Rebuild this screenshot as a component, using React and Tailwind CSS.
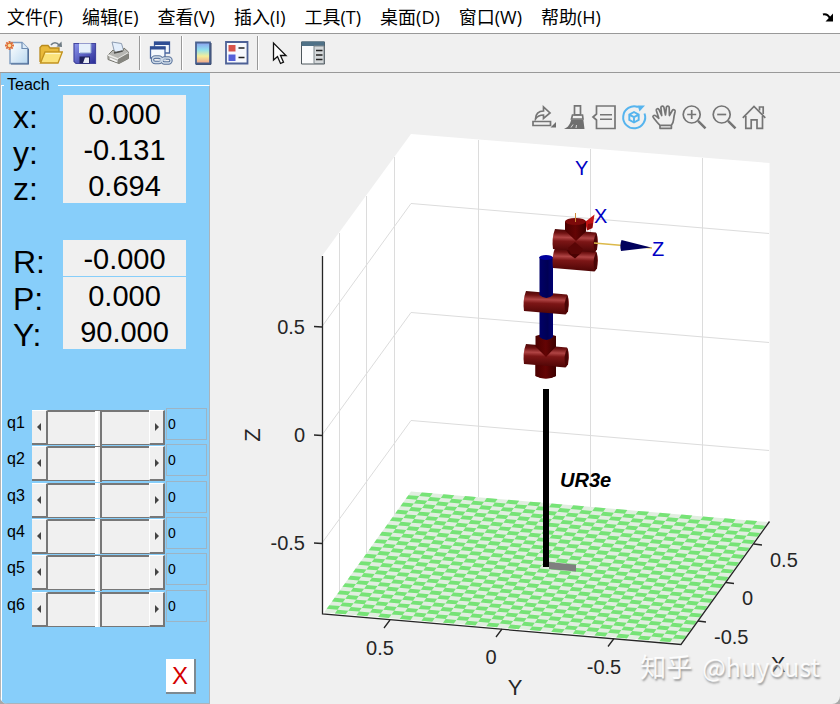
import React from 'react';

const MENUS = ['文件(F)', '编辑(E)', '查看(V)', '插入(I)', '工具(T)', '桌面(D)', '窗口(W)', '帮助(H)'];
const POSITION = [['x:', '0.000'], ['y:', '-0.131'], ['z:', '0.694']];
const ORIENTATION = [['R:', '-0.000'], ['P:', '0.000'], ['Y:', '90.000']];
const JOINTS = ['q1', 'q2', 'q3', 'q4', 'q5', 'q6'];

/* ---------- figure toolbar icons ---------- */

const NewIcon = () => (
  <svg viewBox="0 0 24 24" className="size-6">
    <defs>
      <linearGradient id="page" x1="0" y1="0" x2="1" y2="1">
        <stop offset="0" stopColor="#ffffff" />
        <stop offset="1" stopColor="#b9d8f0" />
      </linearGradient>
    </defs>
    <path d="M5 1.500h12l6 6V22.500H5z" fill="url(#page)" stroke="#7f9cc0" strokeWidth="1.400" />
    <path d="M17 1.500v6h6" fill="#dcebf8" stroke="#6f8cb2" strokeWidth="1.200" />
    <path d="M23.300 8v15H6" fill="none" stroke="#4a6892" strokeWidth="1.200" />
    <path d="M4.500 0v9M0 4.500h9M1.300 1.300l6.400 6.400M7.700 1.300L1.300 7.700" stroke="#e0703a" strokeWidth="1.900" />
    <circle cx="4.500" cy="4.500" r="1.700" fill="#fbe3a0" />
  </svg>
);

const OpenIcon = () => (
  <svg viewBox="0 0 24 24" className="size-6">
    <path d="M1 21V6.500L3 4.500h6l2 2.500h9v5" fill="#e9b93a" stroke="#b98a1c" strokeWidth="1.300" />
    <path d="M1.500 22L6 11h17.300L19 22z" fill="#fbe27a" stroke="#c2921f" strokeWidth="1.300" />
    <path d="M6.500 12.500h15" stroke="#fff6c4" strokeWidth="1.300" />
    <path d="M12 4c2-3 6-3 8 0" fill="none" stroke="#6e7b84" strokeWidth="1.600" />
    <path d="M17.500 5.500L23 6l-.500-5.500z" fill="#6e7b84" />
  </svg>
);

const SaveIcon = () => (
  <svg viewBox="0 0 24 24" className="size-6">
    <defs>
      <linearGradient id="disk" x1="0" y1="0" x2="1" y2="1">
        <stop offset="0" stopColor="#8d96ee" />
        <stop offset="1" stopColor="#2a2c96" />
      </linearGradient>
    </defs>
    <path d="M1 2.500h21.500v20H3l-2-2z" fill="url(#disk)" stroke="#44469f" strokeWidth="1.200" />
    <path d="M6 2.500h12v9.500H6z" fill="#e6f0fb" />
    <path d="M18 2.500v9.500H7" fill="none" stroke="#8da3cf" />
    <path d="M6.500 15.500h10.500v7H6.500z" fill="#20225c" />
    <path d="M12 16.500h4v5.500h-6z" fill="#e8ecf5" />
  </svg>
);

const PrintIcon = () => (
  <svg viewBox="0 0 24 24" className="size-6">
    <path d="M5 1l9.500 1.500 2.500 8.500-9 2z" fill="#e3eefb" stroke="#8c9bb0" />
    <path d="M1 14l5-5 3 2.500 7-1.500 1-3 4.500 4v6.500L12 22.500 1 18.500z" fill="#b7b7b3" stroke="#77776f" />
    <path d="M1 14l10 4 10.500-6" fill="none" stroke="#ededea" strokeWidth="1.500" />
    <path d="M11 18v4.500l10.500-5V12z" fill="#85857f" />
    <path d="M3 17.500l7 3" stroke="#f7f7f7" strokeWidth="1.500" />
    <path d="M7 12l8.500-2" stroke="#4f4f4c" strokeWidth="1.500" />
  </svg>
);

const LinkIcon = () => (
  <svg viewBox="0 0 24 24" className="size-6">
    <path d="M5.500 1h15v11h-15z" fill="#f4f8fd" stroke="#4b67a0" strokeWidth="1.300" />
    <path d="M5 1h16v3H5z" fill="#2f4e94" />
    <path d="M1.500 6h14.500v11H1.500z" fill="#f4f8fd" stroke="#4b67a0" strokeWidth="1.300" />
    <path d="M1 5.500h15.500v3H1z" fill="#2f4e94" />
    <g fill="none" stroke="#57719a" strokeWidth="3.400">
      <rect x="3.500" y="16" width="9" height="5.500" rx="2.700" />
      <rect x="13" y="17" width="9" height="5" rx="2.500" />
    </g>
    <g fill="none" stroke="#cfdbe9" strokeWidth="1.300">
      <rect x="3.500" y="16" width="9" height="5.500" rx="2.700" />
      <rect x="13" y="17" width="9" height="5" rx="2.500" />
      <path d="M9 19h8" />
    </g>
  </svg>
);

const ColorbarIcon = () => (
  <svg viewBox="0 0 24 24" className="size-6">
    <defs>
      <linearGradient id="cbar" x1="0" y1="0" x2="0" y2="1">
        <stop offset="0" stopColor="#8a9ff0" />
        <stop offset=".35" stopColor="#8fe0ee" />
        <stop offset=".65" stopColor="#f4ee9a" />
        <stop offset="1" stopColor="#f0a08a" />
      </linearGradient>
    </defs>
    <path d="M5 1.500h14v21H5z" fill="url(#cbar)" stroke="#4a6290" strokeWidth="1.800" />
    <path d="M20 2v21.300H5" fill="none" stroke="#2d3f66" />
  </svg>
);

const LegendIcon = () => (
  <svg viewBox="0 0 24 24" className="size-6">
    <path d="M1 1h21.500v21.500H1z" fill="#f7f9fd" stroke="#4d6196" strokeWidth="1.800" />
    <path d="M3.500 4h7v6.500h-7z" fill="#d9534a" />
    <path d="M3.500 13.500h7V20h-7z" fill="#5560d8" />
    <path d="M13.500 7h6M13.500 16.500h6" stroke="#222" strokeWidth="1.600" />
  </svg>
);

const PointerIcon = () => (
  <svg viewBox="0 0 24 24" className="size-6">
    <path d="M6.500 2v17l4-3.500 3 7 3-1.300-3-6.700H19z" fill="#fff" stroke="#111" strokeWidth="1.300" />
  </svg>
);

const InspectorIcon = () => (
  <svg viewBox="0 0 24 24" className="size-6">
    <path d="M.5 1h23v22H.5z" fill="#fafbfc" stroke="#4d565c" />
    <path d="M.5.500h23V5H.5z" fill="#4f7187" />
    <path d="M13 5h10v17.500H13z" fill="#d4d8da" stroke="#7e878c" />
    <path d="M15 9.500h6.500M15 14h6.500M15 18.500h6.500" stroke="#222" strokeWidth="1.600" />
  </svg>
);

const TOOL_GROUPS = [
  [['New figure', NewIcon], ['Open', OpenIcon], ['Save', SaveIcon], ['Print', PrintIcon]],
  [['Link plot', LinkIcon]],
  [['Colorbar', ColorbarIcon], ['Legend', LegendIcon]],
  [['Edit plot', PointerIcon], ['Inspector', InspectorIcon]],
];

/* ---------- axes toolbar icons ---------- */

const AXES_TOOLS = [
  ['Export', (
    <>
      <path d="M1 16.500h17.500v4H1z" />
      <path d="M3.500 14c0-5 3-8 8-8V2l6.500 6-6.500 5.500V10C8 10 5.500 11 3.500 14z" />
      <path d="M24 17v5.500h-5.500z" fill="#6e6e6e" stroke="none" />
    </>
  )],
  ['Brush', (
    <>
      <path d="M12.500.800h6v9h-6z" />
      <path d="M10.500 10h10l.500 4H9.500z" />
      <path d="M9.300 14.500h12L22.500 24H2c4-1.500 6-4.500 7.300-9.500z" fill="#6e6e6e" stroke="none" />
      <path d="M9 22.500l2-3M14 23l.500-3" stroke="#d8d8d8" strokeWidth="1" />
    </>
  )],
  ['Data tips', (
    <>
      <path d="M4.500 1h18.500v22.500H4.500V15L1 12l3.500-3z" />
      <path d="M8 9.800h12M8 14.200h12" strokeWidth="1.600" />
    </>
  )],
  ['Rotate 3D', (
    <g stroke="#56b4ee">
      <path d="M16 2A11 11 0 1 0 22.500 8.500" strokeWidth="2" />
      <path d="M15.500.500h7.500l-5.500 6z" fill="#56b4ee" stroke="none" />
      <path d="M12 7l4.700 2.600v5.300L12 17.500l-4.700-2.600V9.600zM7.300 9.600l4.700 2.600 4.700-2.600M12 12.200v5.300" strokeWidth="1.900" />
    </g>
  )],
  ['Pan', (
    <path
      d="M8 23.300v-3C5.500 18 3.300 15 1.200 12.300c-.9-1.300.9-2.700 2.300-1.600l3.300 2.600L4.300 5.500c-.4-1.800 2-2.500 2.700-.8L9.700 10.500 8.900 2.700c0-1.900 2.600-2.100 3-.3l1.600 7.600L14.400 2.200c.3-1.700 2.800-1.400 2.800.4l.2 8L20.300 5.500c.9-1.600 3.200-.8 2.800 1-.9 3.500-1.200 5-1.500 8-.2 2.500-.7 4-2.200 5.800v3z M8.500 20.300h10.500"
      strokeLinejoin="round"
    />
  )],
  ['Zoom in', (
    <>
      <circle cx="9.700" cy="9.500" r="8.500" />
      <path d="M9.700 5v9M5.200 9.500h9" />
      <path d="M16 15.800l7.500 7.500" strokeWidth="2.400" />
    </>
  )],
  ['Zoom out', (
    <>
      <circle cx="9.700" cy="9.500" r="8.500" />
      <path d="M5.200 9.500h9" />
      <path d="M16 15.800l7.500 7.500" strokeWidth="2.400" />
    </>
  )],
  ['Restore view', (
    <>
      <path d="M.8 12.800L12 1.500l11.300 11.300" />
      <path d="M3.800 11v12.300h5.400v-8.500h5.800v8.500h5.500V11" />
      <path d="M17.500 5.500V2h3.700v7" />
    </>
  )],
];

/* ---------- plot ---------- */

const TILES = 33;
// back-left corner of the floor plus i steps along Y and j steps along X
const tile = (i, j) =>
  `${(411 + (357 * i - 87 * j) / TILES).toFixed(2)} ${(491.5 + (30.5 * i + 121 * j) / TILES).toFixed(2)}`;

let floor = '';
for (let j = 0; j < TILES; j++) {
  for (let i = 0; i < TILES; i++) {
    if ((i + j) % 2) {
      floor += `M${tile(i, j)}L${tile(i + 1, j)}L${tile(i + 1, j + 1)}L${tile(i, j + 1)}z`;
    }
  }
}

// horizontal joint cylinder, x/y is the top-left corner
const Joint = ({ x, y }) => (
  <g transform={`translate(${x} ${y})`}>
    <path d="M2 0L43 3.500Q46 9 44 20.500L41.500 23.500L0 20Q-1.500 9 2 0z" fill="url(#red)" />
    <path d="M43.500 4Q38.500 12 42 23Q46 15 43.500 4z" fill="#4a0505" />
  </g>
);

function RobotPlot() {
  return (
    <svg viewBox="210 132 630 572" className="block w-full h-auto" fontFamily="'Liberation Sans', Arial, sans-serif">
      <defs>
        <linearGradient id="red" x1="0" y1="0" x2="-.06" y2="1">
          <stop offset="0" stopColor="#4d0707" />
          <stop offset=".16" stopColor="#701212" />
          <stop offset=".34" stopColor="#b04444" />
          <stop offset=".5" stopColor="#7c1616" />
          <stop offset="1" stopColor="#480303" />
        </linearGradient>
        <linearGradient id="redUp" x1="0" y1="0" x2="1" y2="0">
          <stop offset="0" stopColor="#4a0000" />
          <stop offset=".5" stopColor="#640404" />
          <stop offset="1" stopColor="#3c0000" />
        </linearGradient>
        <linearGradient id="blue" x1="0" y1="0" x2="1" y2="0">
          <stop offset="0" stopColor="#000068" />
          <stop offset=".6" stopColor="#000054" />
          <stop offset="1" stopColor="#000074" />
        </linearGradient>
      </defs>

      {/* walls */}
      <path d="M322 256L411 134L769.500 163V522L681 644L322 614z" fill="#fff" />
      <g fill="none" stroke="#dcdcdc">
        <path d="M339.500 233V591M366.500 196V553M394.500 157V515" />
        <path d="M478.500 140V497M590.500 149V507M702.500 158V517" />
        <path d="M322 326.500L411 203.500L769 233.500M322 435L411 312.500L769 342.500M322 543L411 420.500L769 450.500" />
      </g>

      {/* floor */}
      <path d="M411 491.500L768 522L681 643L324 612.500z" fill="#e1eee0" />
      <path d={floor} fill="#76e376" />

      {/* rulers */}
      <g fill="none" stroke="#262626" strokeWidth="1.300">
        <path d="M322.500 256V614L681 644.500L769.500 521.500" />
        <path d="M314 326.500l8 .500M314 435l8 .500M314 543l8 .500" />
        <path d="M390 620l-6 8M502 629l-6 8M614 638.500l-6 8" />
        <path d="M754 544l8 1M726 582.500l8 1M698 621l8 1" />
      </g>
      <g fill="#262626" fontSize="20">
        <text x="305" y="334" textAnchor="end">0.5</text>
        <text x="305" y="442" textAnchor="end">0</text>
        <text x="305" y="550" textAnchor="end">-0.5</text>
        <text x="380" y="655" textAnchor="middle">0.5</text>
        <text x="491" y="664" textAnchor="middle">0</text>
        <text x="604" y="674" textAnchor="middle">-0.5</text>
        <text x="770" y="567">0.5</text>
        <text x="742" y="605">0</text>
        <text x="714" y="644">-0.5</text>
      </g>
      <g fill="#262626" fontSize="22" textAnchor="middle">
        <text transform="translate(260 435) rotate(-90)">Z</text>
        <text x="515" y="695">Y</text>
        <text x="778" y="672">X</text>
      </g>

      {/* base */}
      <path d="M549 562L576 564.700V571.500L549 569z" fill="#7f7f7f" />
      <path d="M543 389h6v178h-6z" fill="#000" />
      <text x="560" y="487" fontSize="20" fontWeight="bold" fontStyle="italic">UR3e</text>

      {/* lower joints and links */}
      <path d="M535.500 360h20.500v16q-10 5-20.500 0z" fill="url(#redUp)" />
      <Joint x={524} y={344} />
      <path d="M535.500 365L556 367v9q-10 5-20.500 0z" fill="url(#redUp)" />
      <path d="M535.500 336q10-4 20.500 0v10.500L546 357l-10.500-10.500z" fill="url(#redUp)" />
      <path d="M539.500 310h13.500v27q-6.500 6-13.500 0z" fill="url(#blue)" />
      <Joint x={524} y={291} />
      <path d="M539.500 257h13.500v38q-6.500 6-13.500 0z" fill="url(#blue)" />
      <ellipse cx="546" cy="257.500" rx="6.700" ry="2.500" fill="#00009c" />

      {/* wrist */}
      <Joint x={553} y={248} />
      <path d="M565 247h20l-5 7-5 4.500-6-4.500z" fill="#4a0202" />
      <Joint x={553} y={229} />
      <path d="M568 248l7-6 8 7-3 5h-9z" fill="#590606" />
      <path d="M585 222L594.500 214.500L592.500 228L587 230.500z" fill="#c21414" />
      <path d="M588 224l5-1-1 5-5 2z" fill="#8a0a0a" />
      <path d="M565 221.500h21v10L576 241l-11-10.500z" fill="url(#redUp)" />
      <ellipse cx="575.500" cy="221.500" rx="10.500" ry="3.500" fill="#7c0a0a" />
      <path d="M575.500 213v9" stroke="#d08a3c" />
      <path d="M594 243L652 248" stroke="#dcb94a" strokeWidth="1.300" />
      <path d="M621.500 240L651 247.500L621 251q-1.500-5 .500-11z" fill="#00005c" />
      <g fill="#0000c4" fontSize="20">
        <text x="575" y="175">Y</text>
        <text x="594" y="223">X</text>
        <text x="652" y="256">Z</text>
      </g>
    </svg>
  );
}

/* ---------- teach panel ---------- */

function PoseRows({ rows, className }) {
  return (
    <div className={className}>
      {rows.map(([name, value]) => (
        <div key={name} className="flex h-9">
          <label htmlFor={`pose-${name}`} className="w-[50px] pt-1 text-[32px] leading-9">{name}</label>
          <output id={`pose-${name}`} className="w-[123px] bg-[#f0f0f0] text-center text-[29px] leading-[38px]">{value}</output>
        </div>
      ))}
    </div>
  );
}

function JointSlider({ name }) {
  return (
    <div className="flex items-start">
      <label htmlFor={name} className="w-[25px] text-base leading-[26px]">{name}</label>
      <div className="flex h-[35px] w-[133px] bg-[#f0f0f0]">
        <button type="button" aria-label={`${name} down`} className="flex w-4 items-center justify-center border-t border-r-2 border-b-2 border-t-white border-r-[#777] border-b-[#777]">
          <svg viewBox="0 0 4 8" className="h-2 w-1"><path d="M4 0v8L0 4z" fill="#444" /></svg>
        </button>
        <input
          id={name}
          type="range"
          min="-180"
          max="180"
          defaultValue="0"
          className="m-0 h-[35px] min-w-0 flex-1 appearance-none border-t-2 border-b border-[#777] bg-[#f0f0f0] [&::-webkit-slider-thumb]:h-[35px] [&::-webkit-slider-thumb]:w-[7px] [&::-webkit-slider-thumb]:appearance-none [&::-webkit-slider-thumb]:border-r-2 [&::-webkit-slider-thumb]:border-l-3 [&::-webkit-slider-thumb]:border-r-[#777] [&::-webkit-slider-thumb]:border-l-white [&::-webkit-slider-thumb]:bg-[#f0f0f0]"
        />
        <button type="button" aria-label={`${name} up`} className="flex w-4 items-center justify-center border-t border-r-2 border-b-2 border-l border-l-white border-t-white border-r-[#777] border-b-[#777]">
          <svg viewBox="0 0 4 8" className="h-2 w-1"><path d="M0 0v8l4-4z" fill="#444" /></svg>
        </button>
      </div>
      <input
        type="text"
        aria-label={`${name} value`}
        defaultValue="0"
        className="-mt-0.5 ml-px h-8 w-[41px] border border-[#9db4c4] bg-transparent px-px text-sm"
      />
    </div>
  );
}

function TeachPanel() {
  return (
    <aside className="flex w-[210px] shrink-0 flex-col border-l border-[#b4b4b4] bg-[#87cefa] pt-[3px]">
      <fieldset className="min-w-0 flex-1 border border-white border-r-[#a9b4bc] border-b-[#a9b4bc]">
        <legend className="ml-0.5 pr-2 pl-[3px] text-base leading-[18px]">Teach</legend>
        <PoseRows rows={POSITION} className="mt-px pl-[11px]" />
        <PoseRows rows={ORIENTATION} className="mt-[37px] pl-[11px] [&>*:nth-child(2)]:mt-px" />
        <div className="mt-[61px] grid h-[218px] grid-rows-6 pl-[5px]">
          {JOINTS.map((q) => <JointSlider key={q} name={q} />)}
        </div>
        <button type="button" className="mt-[31px] ml-[164px] block h-[35px] w-[30px] border-r-2 border-b-2 border-[#7d8a92] bg-white text-2xl text-[#d40000]">
          X
        </button>
      </fieldset>
    </aside>
  );
}

export default function App() {
  return (
    <div className="bg-[#a8a8a8] text-black">
      <div className="flex min-h-screen flex-col overflow-hidden rounded-b-lg bg-[#f0f0f0] font-['Liberation_Sans',Arial,sans-serif]">
        <nav className="flex h-[34px] items-center justify-between border-b border-[#999] bg-white pr-[6px] pl-[7px]">
          <div className="flex gap-[19px]">
            {MENUS.map((m) => (
              <button key={m} type="button" className="font-['Open_Sans','Noto_Sans_CJK_SC',sans-serif] text-lg leading-8 whitespace-nowrap">
                {m}
              </button>
            ))}
          </div>
          <button type="button" aria-label="Dock figure">
            <svg viewBox="0 0 12 10" className="h-[10px] w-3">
              <path d="M1 2.500Q5 1 8 6" fill="none" stroke="#000" strokeWidth="2" />
              <path d="M11 1.500V9.500H3.500z" fill="#000" />
            </svg>
          </button>
        </nav>

        <div className="flex h-[39px] items-center border-b border-[#999] pl-[5px]">
          {TOOL_GROUPS.map((group, g) => (
            <React.Fragment key={g}>
              {g > 0 && <span className="mx-2 h-[34px] w-0.5 border-l border-[#999] bg-white" />}
              <div className="flex gap-[10px]">
                {group.map(([label, Icon]) => (
                  <button key={label} type="button" aria-label={label}><Icon /></button>
                ))}
              </div>
            </React.Fragment>
          ))}
        </div>

        <main className="flex flex-1">
          <TeachPanel />
          <section className="relative min-w-0 flex-1">
            <div className="flex h-[59px] items-end justify-end gap-[6px] pr-[74px] pb-[3px]">
              {AXES_TOOLS.map(([label, shape]) => (
                <button key={label} type="button" aria-label={label}>
                  <svg viewBox="0 0 24 24" className="size-6 overflow-visible" fill="none" stroke="#757575" strokeWidth="1.700">
                    {shape}
                  </svg>
                </button>
              ))}
            </div>
            <RobotPlot />
            <p className="absolute right-5 bottom-5 flex gap-[10px] font-['Noto_Sans_CJK_SC',sans-serif] text-[26px] leading-9 text-white/90 [text-shadow:1px_2px_2px_#999]">
              <span>知乎</span>
              <span className="text-[25px] leading-9">@huyoust</span>
            </p>
          </section>
        </main>
      </div>
    </div>
  );
}
